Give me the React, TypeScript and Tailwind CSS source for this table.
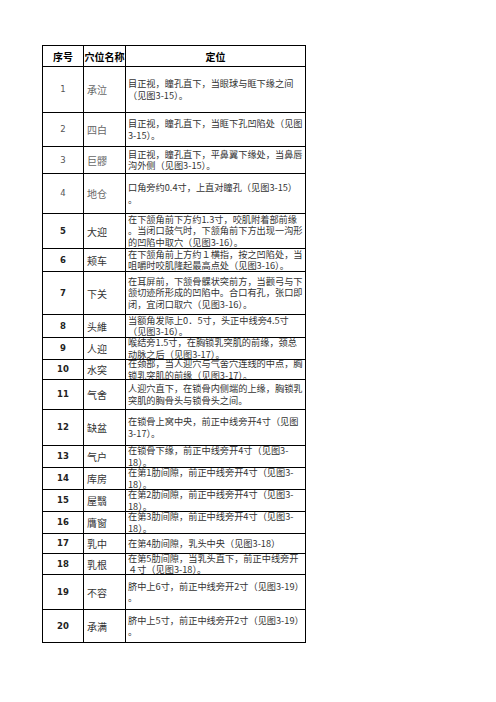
import React from "react";

type Row = { n: string; name: string; lines: string[]; h: string; light?: boolean };

const rows: Row[] = [
  { n: "1", name: "承泣", h: "h-[46px]", light: true, lines: ["目正视，瞳孔直下，当眼球与眶下缘之间", "（见图3-15）。"] },
  { n: "2", name: "四白", h: "h-[34px]", light: true, lines: ["目正视，瞳孔直下，当眶下孔凹陷处（见图", "3-15）。"] },
  { n: "3", name: "巨髎", h: "h-[27px]", light: true, lines: ["目正视，瞳孔直下，平鼻翼下缘处，当鼻唇", "沟外侧（见图3-15）。"] },
  { n: "4", name: "地仓", h: "h-[40px]", light: true, lines: ["口角旁约0.4寸，上直对瞳孔（见图3-15）", "。"] },
  { n: "5", name: "大迎", h: "h-[35px]", lines: ["在下颔角前下方约1.3寸，咬肌附着部前缘", "。当闭口鼓气时，下颔角前下方出现一沟形", "的凹陷中取穴（见图3-16）。"] },
  { n: "6", name: "颊车", h: "h-[23px]", lines: ["在下颔角前上方约１横指，按之凹陷处，当", "咀嚼时咬肌隆起最高点处（见图3-16）。"] },
  { n: "7", name: "下关", h: "h-[43px]", lines: ["在耳屏前，下颔骨髁状突前方，当颧弓与下", "颔切迹所形成的凹陷中。合口有孔，张口即", "闭，宜闭口取穴（见图3-16）。"] },
  { n: "8", name: "头維", h: "h-[23px]", lines: ["当额角发际上0．5寸，头正中线旁4.5寸", "（见图3-16）。"] },
  { n: "9", name: "人迎", h: "h-[22px]", lines: ["喉结旁1.5寸，在胸锁乳突肌的前缘，颈总", "动脉之后（见图3-17）。"] },
  { n: "10", name: "水突", h: "h-[20px]", lines: ["在颈部，当人迎穴与气舍穴连线的中点，胸", "锁乳突肌的前缘（见图3-17）。"] },
  { n: "11", name: "气舍", h: "h-[30px]", lines: ["人迎穴直下，在锁骨内侧端的上缘，胸锁乳", "突肌的胸骨头与锁骨头之间。"] },
  { n: "12", name: "缺盆", h: "h-[36px]", lines: ["在锁骨上窝中央，前正中线旁开4寸（见图", "3-17）。"] },
  { n: "13", name: "气户", h: "h-[22px]", lines: ["在锁骨下缘，前正中线旁开4寸（见图3-", "18）。"] },
  { n: "14", name: "库房", h: "h-[22px]", lines: ["在第1肋间隙，前正中线旁开4寸（见图3-", "18）。"] },
  { n: "15", name: "屋翳", h: "h-[22px]", lines: ["在第2肋间隙，前正中线旁开4寸（见图3-", "18）。"] },
  { n: "16", name: "膺窗", h: "h-[22px]", lines: ["在第3肋间隙，前正中线旁开4寸（见图3-", "18）。"] },
  { n: "17", name: "乳中", h: "h-[20px]", lines: ["在第4肋间隙，乳头中央（见图3-18）"] },
  { n: "18", name: "乳根", h: "h-[21px]", lines: ["在第5肋间隙，当乳头直下，前正中线旁开", "４寸（见图3-18）。"] },
  { n: "19", name: "不容", h: "h-[35px]", lines: ["脐中上6寸，前正中线旁开2寸（见图3-19）", "。"] },
  { n: "20", name: "承满", h: "h-[33px]", lines: ["脐中上5寸，前正中线旁开2寸（见图3-19）", "。"] },
];

const cjk = "font-['Noto_Sans_CJK_SC',sans-serif]";

export default function App() {
  return (
    <div className="bg-white w-[496px] h-[702px] pt-[45px] pl-[42px]">
      <div className={`w-[264px] border-l border-t border-black ${cjk}`}>
        <div className="flex h-[21px] border-b border-black font-bold text-[10px] text-black">
          <div className="w-[41px] border-r border-black flex items-center justify-center">序号</div>
          <div className="w-[42px] border-r border-black flex items-center justify-center whitespace-nowrap overflow-hidden">穴位名称</div>
          <div className="flex-1 border-r border-black flex items-center justify-center">定位</div>
        </div>
        {rows.map((r) => (
          <div key={r.n} className={`flex ${r.h} border-b border-black`}>
            <div
              className={`w-[41px] border-r border-black flex items-center justify-center text-[8.5px] font-['DejaVu_Sans',sans-serif] ${
                r.light ? "text-[#555] font-normal" : "text-[#222] font-semibold"
              }`}
            >
              {r.n}
            </div>
            <div
              className={`w-[42px] border-r border-black flex items-center pl-[3px] text-[10px] ${
                r.light ? "text-[#666]" : "text-[#333]"
              }`}
            >
              {r.name}
            </div>
            <div className="flex-1 border-r border-black flex items-center overflow-hidden pl-[2px] text-[9.2px] leading-[11.5px] text-[#333]">
              <div className="whitespace-nowrap">
                {r.lines.map((l, i) => (
                  <div key={i}>{l}</div>
                ))}
              </div>
            </div>
          </div>
        ))}
      </div>
    </div>
  );
}
